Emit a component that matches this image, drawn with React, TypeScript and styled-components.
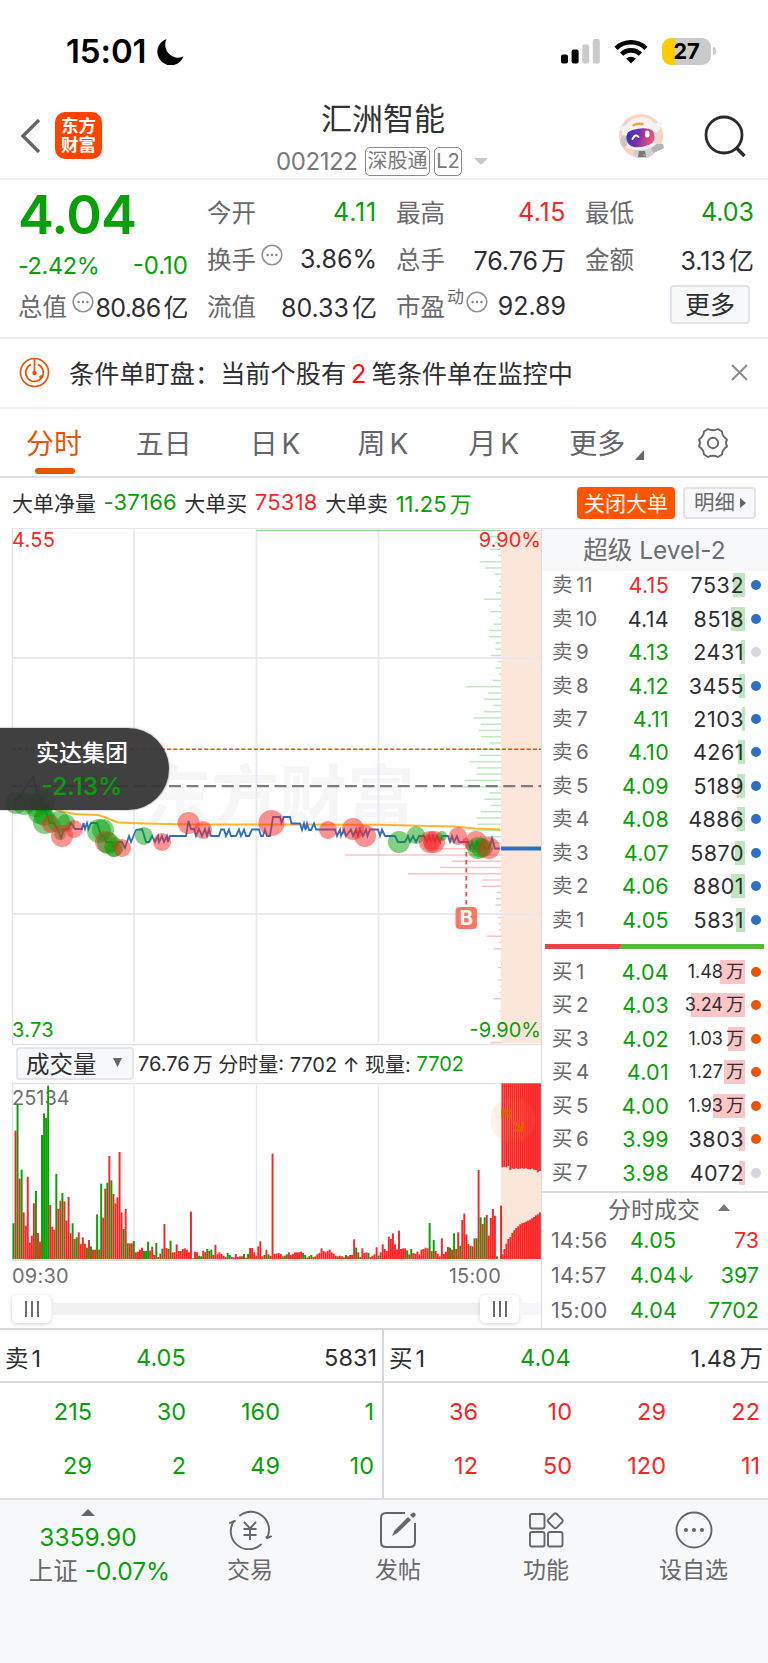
import type { ReactNode } from "react";
import styled, { createGlobalStyle } from "styled-components";

const colors = {
  up: "#f92626",
  down: "#07a007",
  text: "#2e2e31",
  label: "#69696b",
  line: "#dcdde2",
  brand: "#ff5500",
  accent: "#ea5504",
  panel: "#f7f8fa",
};

const GlobalStyle = createGlobalStyle`
  * { box-sizing: border-box; }
  body {
    margin: 0;
    background: #fff;
    color: ${colors.text};
    font-family: Inter, "Noto Sans CJK SC", sans-serif;
    font-weight: 400;
  }
  svg { display: block; }
`;

type Tone = "up" | "down" | "text" | "label";

const Page = styled.div`
  width: 768px;
  height: 1663px;
  overflow: hidden;
  display: flex;
  flex-direction: column;
  white-space: nowrap;
`;

const Num = styled.span<{ $tone?: Tone; $size?: number; $track?: number }>`
  color: ${(p) => colors[p.$tone ?? "text"]};
  ${(p) => p.$size && `font-size: ${p.$size}px;`}
  letter-spacing: ${(p) => p.$track ?? 0}px;
`;

// 万 / 亿 after a number, or the level after 卖 / 买
const Spaced = styled.span`
  margin-left: 3px;
`;

/* ---------- status bar ---------- */

const StatusBar = styled.div`
  height: 101px;
  padding: 1px 52px 0 66px;
  display: flex;
  align-items: center;
  justify-content: space-between;
`;

const Clock = styled.div`
  display: flex;
  align-items: center;
  gap: 11px;
  font-size: 33px;
  font-weight: 600;
  color: #000;
  letter-spacing: -0.1px;
`;

const StatusIcons = styled.div`
  display: flex;
  align-items: center;
  gap: 14px;
`;

const Battery = styled.div`
  width: 49px;
  height: 27px;
  border-radius: 9px;
  background: linear-gradient(90deg, #ffcc00 0 13px, #cacaca 13px);
  color: #000;
  font-size: 22px;
  font-weight: 700;
  line-height: 27px;
  text-align: center;
  letter-spacing: -0.2px;
`;

const BatteryRow = styled.div`
  display: flex;
  align-items: center;
  gap: 2px;
`;

const BatteryTip = styled.div`
  width: 3px;
  height: 8px;
  border-radius: 0 3px 3px 0;
  background: #cacaca;
`;

/* ---------- title bar ---------- */

const TitleBar = styled.header`
  height: 79px;
  padding: 0 22px 0 20px;
  display: grid;
  grid-template-columns: 256px 212px 1fr;
  border-bottom: 2px solid #f0f0f1;
`;

const TitleLeft = styled.div`
  display: flex;
  align-items: center;
  gap: 13px;
  padding-bottom: 8px;
`;

const Logo = styled.div`
  width: 47px;
  height: 47px;
  border-radius: 10px;
  background: #ff4400;
  color: #fff;
  font-size: 17.5px;
  font-weight: 700;
  line-height: 19px;
  padding-top: 4px;
  text-align: center;
`;

const TitleCenter = styled.div`
  display: flex;
  flex-direction: column;
  color: #333;
`;

const StockName = styled.div`
  padding: 0 0 0 45px;
  margin-top: -2px;
  font-size: 31px;
  line-height: 39px;
`;

const StockCode = styled.div`
  display: flex;
  align-items: center;
  gap: 4px;
  margin-top: 8px;
  height: 30px;
  font-size: 24px;
  letter-spacing: -0.4px;
  color: #79797b;
  svg {
    flex: none;
    margin-left: 8px;
  }
`;

const CodeNumber = styled.span`
  width: 85px;
`;

const CodeTag = styled.span<{ $width: number }>`
  flex: none;
  width: ${(p) => p.$width}px;
  height: 29px;
  border: 1.5px solid #8b8b8d;
  border-radius: 5px;
  font-size: 20px;
  letter-spacing: 0;
  line-height: 26px;
  text-align: center;
`;

const TitleRight = styled.div`
  display: flex;
  justify-content: flex-end;
  align-items: center;
  gap: 39px;
  padding-bottom: 8px;
`;

/* ---------- quote ---------- */

const Quote = styled.section`
  height: 159px;
  padding: 8px 13px 0 18px;
  display: grid;
  grid-template-columns: 170px 170px 170px 169px;
  column-gap: 19px;
  border-bottom: 2px solid #efeff0;
`;

const QuoteCol = styled.div`
  display: flex;
  flex-direction: column;
`;

const Price = styled.div`
  height: 53px;
  line-height: 53px;
  font-size: 54px;
  font-weight: 600;
  color: ${colors.down};
  letter-spacing: -0.8px;
`;

const Cell = styled.div`
  height: 47px;
  display: flex;
  justify-content: space-between;
  align-items: center;
  font-size: 25px;
  letter-spacing: 0.2px;
`;

const ChangeCell = styled(Cell)`
  height: 41px;
  padding-top: 7px;
  font-size: 23.5px;
  letter-spacing: -0.2px;
`;

const CellLabel = styled.span`
  display: flex;
  align-items: center;
  gap: 5px;
  font-size: 24.5px;
  letter-spacing: 0;
  color: ${colors.label};
  sup {
    font-size: 17px;
    margin: -16px -3px 0 -3px;
    line-height: 1;
  }
  svg {
    margin-top: -8px;
  }
`;

const MoreButton = styled.button`
  width: 80px;
  height: 39px;
  padding: 0;
  margin: 3px 4px 0 auto;
  border: 2px solid #e2e3e9;
  border-radius: 4px;
  background: ${colors.panel};
  color: ${colors.text};
  font: 400 25px/34px Inter, "Noto Sans CJK SC", sans-serif;
`;

/* ---------- alert ---------- */

const Alert = styled.section`
  height: 70px;
  padding: 0 20px 2px 19px;
  display: flex;
  align-items: center;
  border-bottom: 2px solid #efeff0;
  font-size: 25.2px;
`;

const AlertText = styled.span`
  margin-left: 19px;
  flex: 1;
  em {
    font-style: normal;
    color: #ff0f0f;
    margin: 0 5px 0 5px;
  }
`;

/* ---------- tabs ---------- */

const Tabs = styled.nav`
  height: 69px;
  display: flex;
  padding: 0 39px 0 26px;
  border-bottom: 2px solid ${colors.line};
`;

const Tab = styled.div<{ $width: number; $active?: boolean }>`
  width: ${(p) => p.$width}px;
  padding-top: 14px;
  font-size: 28px;
  line-height: 42px;
  word-spacing: -4px;
  color: ${(p) => (p.$active ? colors.accent : "#666668")};
  display: flex;
  flex-direction: column;
`;

const TabUnderline = styled.i`
  width: 40px;
  height: 6px;
  margin: 3px 0 0 9px;
  border-radius: 3px;
  background: ${colors.accent};
`;

const TabMore = styled.span`
  display: flex;
  align-items: flex-end;
  gap: 10px;
  svg {
    margin-bottom: 5px;
  }
`;

const Gear = styled.div`
  padding-top: 18px;
`;

/* ---------- big order info ---------- */

const BigOrders = styled.div`
  height: 50px;
  padding: 0 12px;
  display: flex;
  align-items: center;
  gap: 7.5px;
  font-size: 21px;
`;

const BigOrderText = styled.div`
  display: flex;
  align-items: center;
  gap: 7.5px;
  padding-bottom: 2px;
`;

const BigOrderActions = styled.div`
  margin-left: auto;
  display: flex;
  gap: 8px;
`;

const ToggleOrders = styled.button`
  width: 98px;
  height: 32px;
  padding: 0;
  border: 0;
  border-radius: 4px;
  background: ${colors.brand};
  color: #fff;
  font: 400 21px/31px Inter, "Noto Sans CJK SC", sans-serif;
`;

const DetailButton = styled.button`
  width: 73px;
  height: 32px;
  padding: 0 0 0 9px;
  display: flex;
  align-items: center;
  gap: 5px;
  border: 2px solid #e2e3e9;
  border-radius: 4px;
  background: ${colors.panel};
  color: ${colors.label};
  font: 400 20.5px/28px Inter, "Noto Sans CJK SC", sans-serif;
`;

/* ---------- charts ---------- */

const Main = styled.main`
  height: 802px;
  display: grid;
  grid-template-columns: 541px 227px;
  border-bottom: 2px solid #d6d8de;
`;

const ChartColumn = styled.div`
  position: relative;
  display: flex;
  flex-direction: column;
`;

const FloatPill = styled.div`
  position: absolute;
  left: 0;
  top: 200px;
  width: 169px;
  height: 82px;
  padding: 6px 5px 0 0;
  border-radius: 0 42px 42px 0;
  background: rgba(52, 52, 52, 0.94);
  box-shadow: 0 0 2px rgba(0, 0, 0, 0.5);
  color: #fff;
  text-align: center;
  font-size: 23px;
  font-weight: 500;
  line-height: 38px;
  div {
    color: ${colors.down};
    font-size: 24.5px;
    line-height: 28px;
  }
`;

const VolumeHead = styled.div`
  height: 37px;
  padding: 0 0 2px 16px;
  display: flex;
  align-items: center;
  font-size: 20px;
`;

const VolumeSelect = styled.div`
  width: 118px;
  height: 33px;
  margin-right: 4px;
  padding: 0 10px 2px 8px;
  display: flex;
  align-items: center;
  justify-content: space-between;
  border: 2px solid #e4e5ea;
  border-radius: 4px;
  background: ${colors.panel};
  font-size: 23.5px;
`;

const TimeAxis = styled.div`
  height: 33px;
  padding: 0 40px 3px 12px;
  display: flex;
  align-items: center;
  justify-content: space-between;
  font-size: 20px;
  letter-spacing: 0.2px;
  color: #6f6f71;
`;

const Slider = styled.div`
  height: 30px;
  margin: 0 0 0 12px;
  display: flex;
  align-items: center;
`;

const SliderTrack = styled.div<{ $width?: number }>`
  height: 12px;
  ${(p) => (p.$width ? `width: ${p.$width}px;` : "flex: 1;")}
  background: ${(p) => (p.$width ? "#f7f7fb" : "#f1f1f3")};
`;

const SliderThumb = styled.div`
  width: 39px;
  height: 28px;
  border-radius: 5px;
  background: #fff;
  box-shadow: 0 1px 4px rgba(0, 0, 0, 0.18);
  display: flex;
  align-items: center;
  justify-content: center;
  gap: 4px;
  i {
    width: 2px;
    height: 16px;
    background: #6d6d6d;
  }
`;

/* ---------- order book ---------- */

const Book = styled.aside`
  display: flex;
  flex-direction: column;
  border-left: 1px solid ${colors.line};
`;

const BookTitle = styled.div`
  height: 43px;
  border-top: 1px solid ${colors.line};
  background: ${colors.panel};
  color: #6d6d6f;
  font-size: 24.5px;
  line-height: 42px;
  padding-right: 1px;
  text-align: center;
`;

const Orders = styled.div<{ $lift?: number }>`
  display: flex;
  flex-direction: column;
  margin-top: -${(p) => p.$lift ?? 0}px;
`;

const OrderRow = styled.div`
  height: 33.45px;
  padding: 0 7px 0 10px;
  display: grid;
  grid-template-columns: 24px 40px 53px 75px 1fr;
  align-items: center;
  line-height: 30px;
  font-size: 21.5px;
`;

const OrderName = styled.span`
  font-size: 20.5px;
  color: ${colors.label};
`;

const OrderPrice = styled.span<{ $tone: Tone }>`
  color: ${(p) => colors[p.$tone]};
  text-align: right;
  letter-spacing: 0.3px;
`;

const OrderVolume = styled.span<{ $side: string; $bar: number; $small?: boolean }>`
  margin-left: 12px;
  height: 24px;
  line-height: 24px;
  font-size: ${(p) => (p.$small ? 18 : 21.5)}px;
  letter-spacing: ${(p) => (p.$small ? 0 : 0.5)}px;
  text-align: right;
  margin-right: -1px;
  padding-right: 1px;
  background: linear-gradient(${(p) => (p.$side === "sell" ? "#bfe6bf, #bfe6bf" : "#fcc6c6, #fcc6c6")}) right / ${(p) => p.$bar}px 100% no-repeat;
`;

const Dot = styled.i<{ $color: string }>`
  width: 10px;
  height: 10px;
  margin-left: auto;
  border-radius: 50%;
  background: ${(p) => p.$color};
`;

const RatioBar = styled.div`
  height: 5px;
  margin: 8px 4px 6px 3px;
  background: linear-gradient(120deg, #ee4145 0 66px, #56b93d 66px);
`;

const TradesTitle = styled.div`
  height: 31.5px;
  margin-top: 2px;
  border-top: 2px solid ${colors.line};
  padding: 0 0 1px 66px;
  display: flex;
  align-items: center;
  gap: 18px;
  color: ${colors.label};
  font-size: 23px;
`;

const TradeRow = styled.div`
  height: 34.7px;
  padding: 0 9px 0 9px;
  display: grid;
  grid-template-columns: 79px 1fr auto;
  align-items: center;
  font-size: 21.5px;
`;

/* ---------- level one queue ---------- */

const Queue = styled.section`
  height: 170px;
  display: grid;
  grid-template-columns: 384px 384px;
  border-bottom: 2px solid ${colors.line};
`;

const QueueSide = styled.div`
  &:first-child {
    border-right: 2px solid #d6d8de;
  }
`;

const QueueHead = styled.div`
  height: 53px;
  padding: 3px 5px 0 5px;
  display: grid;
  grid-template-columns: 131px 48px 1fr;
  align-items: center;
  border-bottom: 2px solid #d6d8de;
  font-size: 23.5px;
  & > :last-child {
    text-align: right;
  }
`;

const QueueGrid = styled.div<{ $tone: Tone }>`
  height: 113px;
  padding: 1px 8px 0 0;
  display: grid;
  grid-template-columns: 94px 94px 94px 94px;
  grid-auto-rows: 54px;
  align-items: center;
  justify-content: end;
  text-align: right;
  font-size: 23.5px;
  color: ${(p) => colors[p.$tone]};
`;

/* ---------- bottom bar ---------- */

const BottomBar = styled.footer`
  flex: 1;
  padding-top: 9px;
  display: grid;
  grid-template-columns: 176px 148px 148px 148px 147px;
  background: ${colors.panel};
`;

const IndexBox = styled.div`
  display: flex;
  flex-direction: column;
  align-items: center;
  font-size: 24.5px;
  line-height: 34px;
  color: ${colors.label};
  & > div {
    height: 34px;
  }
  & > :first-child {
    margin-bottom: 4px;
  }
  & > :last-child {
    margin-left: 23px;
  }
`;

const NavItem = styled.div`
  display: flex;
  flex-direction: column;
  align-items: center;
  padding-top: 1px;
  gap: 3px;
  font-size: 23px;
  line-height: 34px;
  color: ${colors.label};
`;

/* ---------- data ---------- */

const sells: [string, string, Tone, string, number, boolean?][] = [
  ["11", "4.15", "up", "7532", 12],
  ["10", "4.14", "text", "8518", 14],
  ["9", "4.13", "down", "2431", 4, true],
  ["8", "4.12", "down", "3455", 6],
  ["7", "4.11", "down", "2103", 3],
  ["6", "4.10", "down", "4261", 7],
  ["5", "4.09", "down", "5189", 8.5],
  ["4", "4.08", "down", "4886", 8],
  ["3", "4.07", "down", "5870", 10],
  ["2", "4.06", "down", "8801", 14.5],
  ["1", "4.05", "down", "5831", 9.5],
];

const buys: [string, string, string, number, boolean?][] = [
  ["1", "4.04", "1.48万", 25],
  ["2", "4.03", "3.24万", 54],
  ["3", "4.02", "1.03万", 17],
  ["4", "4.01", "1.27万", 21],
  ["5", "4.00", "1.93万", 32],
  ["6", "3.99", "3803", 6],
  ["7", "3.98", "4072", 6.5, true],
];

// resting orders by price step, widths in px
const sellDepth = [
  0, 20, 7, 11, 3, 21.5, 15.6, 6, 1.5, 2.5, 5, 17, 2, 10.5, 1.5, 7.3, 12.5, 12, 5.5, 5.5, 10, 3, 5.5, 2.5, 8.3,
  35, 13, 17, 7.6, 17, 28, 20.5, 22, 20, 11.5, 33, 21.5, 31.6, 24, 24.7, 36, 41, 11.5, 16.7, 9.7, 20, 24.7, 23.6,
  28, 21, 14,
];
const buyDepth = [
  73, 156, 49.4, 61, 93, 18.4, 19.5, 4.5, 5.2, 5.6, 1, 2.8, 2.4, 1.7, 14, 1.4, 7.3, 0.7, 0.7, 3, 0.7, 3.5, 1,
  1.4, 7.6, 0.7, 1.4, 0.4, 0.4, 0.4, 0.4, 10.8,
];

// minute volume, negative = down minute
const volumes = [
  -107, 385, -465, 241, -268, 140, 100, 247, 49, 70, 167, -204, 78, 52, -372, -437, -423, -520, 162, 97, 88, -255,
  150, 175, -198, 173, 115, 186, 77, -107, 60, -65, 80, 45, 65, 46, -34, 57, -38, 28, 28, -134, 28, -226, 124, 211,
  -229, 309, -236, 195, 167, 185, 321, 140, -90, 150, -47, 47, 47, -54, 20, 22, 28, 34, -24, -24, -52, 25, 37, 12,
  -48, 6, 16, -31, 105, 33, 30, -55, 20, 20, 44, 24, 24, 30, 32, 28, 20, 142, -2, 22, 20, -10, -8, 25, 20, -30, 24,
  -28, 12, 42, 14, 20, 15, 10, 6, -18, -12, 6, 5, 15, 6, 8, 8, -15, 4, -15, 33, 33, 20, 10, 38, 53, 8, -12, 28,
  -14, 10, 316, 16, 16, 18, 15, -8, 10, -14, 20, 12, 15, 20, 20, 20, 22, -18, -12, 4, 8, -12, 6, 8, 14, 18, 32,
  24, 20, 24, 28, 20, 16, 10, -8, 10, 8, 5, -12, 8, 12, 12, 59, -34, 20, -6, 32, 18, 20, -18, 6, 10, 14, 35, -10,
  20, 44, 30, 24, 67, 60, 77, 44, 28, 85, 30, 32, 32, -26, 14, -30, 18, 16, 22, 14, 28, 30, 34, 32, -108, 24, -57,
  24, 16, 8, 62, 15, 22, 36, -34, 28, -77, 30, 80, -40, 117, 136, 74, 45, -40, 38, 62, -62, 267, -125, 105, -125,
  132, 70, 123, 150, 130, -8, 0, 160,
];

const auctionTop = [252, 250, 252, 248, 260, 256, 257, 255, 257, 256, 255, 256, 255, 257, 258, 256, 259, 260, 267, 263];
const auctionBottom = [14, 30, 46, 60, 66, 78, 86, 93, 98, 104, 107, 109, 112, 115, 118, 122, 126, 131, 134, 140];

const priceLine: [number, number][] = [
  [13, 800], [20, 796], [27, 785], [33, 777], [38, 795], [44, 806], [50, 823], [54, 823], [58, 830], [61, 838],
  [64, 829], [68, 829], [71, 823], [75, 829], [82, 829], [83.5, 823], [85, 829], [87, 823], [88.5, 829], [91, 823],
  [97, 823], [101, 835.5], [104, 836], [106, 842], [111, 842], [114, 848], [118, 842], [122, 842], [125, 848],
  [129, 836], [131, 842], [136, 830], [142, 829], [146, 842], [149, 842], [152, 836], [155, 842], [158, 836],
  [159, 842], [162, 836], [164, 842], [167, 836], [168, 842], [170, 836], [186, 836], [188.5, 821], [191, 829],
  [194, 829], [196, 836], [199, 829], [202, 836], [205, 829], [207, 836], [209, 829], [211, 836], [219, 836],
  [221, 829.5], [224, 829.5], [226, 836], [229, 829.5], [231, 836], [236, 836], [239, 829.5], [241, 836],
  [244, 829.5], [246, 836], [249, 836], [252, 829.5], [259, 829.5], [261, 836], [263, 836], [265, 829.5],
  [267, 836], [270, 836], [273, 817], [280, 817], [281.5, 823], [284, 817], [290, 817], [291.5, 823.5], [300, 823.5],
  [302, 830], [304, 823.5], [305.5, 830], [307, 823.5], [309, 830], [311, 830], [314, 823.5], [316, 829.5],
  [335, 829.5], [337, 836], [340, 829.5], [341, 836], [344, 829.5], [346, 836], [351, 829.5], [353, 836],
  [356, 829.5], [358, 836], [360, 829.5], [363, 836], [366, 829.5], [367.5, 836], [370, 829.5], [378, 829.5],
  [380, 836], [382, 829.5], [385, 836], [395, 836], [398, 842], [405, 842], [408, 836], [410, 842], [413, 836],
  [416, 842], [419, 836], [424, 836], [427, 842], [429, 836], [431, 842], [433, 836], [435, 842], [437, 836],
  [440, 842], [442, 836], [448, 836], [450, 842], [452, 836], [454, 842], [457, 836], [459, 842], [468, 842],
  [470, 848.5], [472, 842], [474, 848.5], [477, 842], [479, 848.5], [482, 842], [485, 848.5], [489, 848.5],
  [492, 838], [495, 848.5], [500, 848.5],
];

const bigOrders: [number, number, number, "r" | "g"][] = [
  [16, 803, 11, "g"], [24, 804, 11, "g"], [36, 805, 12, "g"], [43, 801, 12, "g"], [40, 812, 12, "g"],
  [45, 822, 12, "g"], [44, 816, 10, "g"], [51, 824, 9, "r"], [59, 822, 11, "g"], [66, 823, 9, "g"],
  [60, 834, 6, "g"], [62, 836, 11, "r"], [74, 829, 9, "r"], [103, 830, 11, "g"], [99, 831, 12, "g"],
  [106, 842, 11, "r"], [108, 843, 11, "g"], [114, 847, 10, "g"], [114, 849, 8, "g"], [122, 848, 9, "r"],
  [144, 836, 9, "g"], [162, 842, 9, "r"], [188.5, 823, 11, "r"], [203, 830, 9, "r"], [271.5, 823, 13, "r"],
  [328, 830, 9, "r"], [353, 829, 11, "r"], [365, 836, 11, "r"], [399, 842, 11, "g"], [416, 835, 9, "g"],
  [430, 842, 11, "r"], [434, 842, 11, "r"], [431.5, 842, 8, "r"], [442, 836, 5, "g"], [458, 836, 9, "r"],
  [466, 842, 4, "r"], [476, 842, 11, "r"], [478, 848, 11, "g"], [481, 848, 10, "g"], [484, 848, 9, "g"],
  [489, 848, 11, "r"],
];

/* ---------- drawings ---------- */

const gridX = [134, 256.5, 378.5];

const Amount = ({ value }: { value: string }) => {
  const unit = /[万亿]$/.test(value) ? value.slice(-1) : "";
  return (
    <>
      {unit ? value.slice(0, -1) : value}
      {unit && <Spaced>{unit}</Spaced>}
    </>
  );
};

const MoreDots = () => (
  <svg width="22" height="22" viewBox="0 0 22 22" fill="none">
    <circle cx="11" cy="11" r="9.8" stroke="#929294" strokeWidth="1.6" />
    {[6.6, 11, 15.4].map((x) => (
      <circle key={x} cx={x} cy="11" r="1.2" fill="#858587" />
    ))}
  </svg>
);

const Triangle = ({ w, h, color, points }: { w: number; h: number; color: string; points: string }) => (
  <svg width={w} height={h} viewBox="0 0 10 10" preserveAspectRatio="none">
    <polygon points={points} fill={color} />
  </svg>
);

const Robot = () => (
  <svg width="47" height="46" viewBox="0 0 47 46">
    <defs>
      <linearGradient id="visor" x1="0" y1="0" x2="1" y2="0.2">
        <stop offset="0" stopColor="#2b36ac" />
        <stop offset="0.5" stopColor="#7d2fae" />
        <stop offset="1" stopColor="#ef5373" />
      </linearGradient>
    </defs>
    <circle cx="23" cy="23" r="22" fill="#fdd3c0" />
    <path d="M17 34h16l2 8-5 3H20l-5-3z" fill="#cfcfd6" />
    <path d="M33 35l6-4 6 0 1 4-6 3-5 2z" fill="#b4b4bd" />
    <path d="M21 38h6l1 6h-8z" fill="#77777f" />
    <circle cx="26" cy="42" r="1" fill="#f39a60" />
    <path d="M1 12q2 3 7 0 6-8 16-8 8 0 12 6 6 1 7-4 3 8-4 13l0 9q-2 8-17 9-13 1-16-7l-2-12q-3-2-3-6z" fill="#f4f3f5" />
    <ellipse cx="6" cy="28" rx="3.5" ry="6" fill="#c8c7ce" />
    <ellipse cx="37.500" cy="25" rx="3" ry="6" fill="#dcdce1" />
    <path d="M8.500 26q-1-7 6-9 10-3 17-1 5 1 5 8 0 6-6 8-8 3-15 2-6-2-7-8z" fill="url(#visor)" />
    <path d="M14.500 26q3-6 6-2" fill="none" stroke="#fff" strokeWidth="2" strokeLinecap="round" />
    <rect x="27" y="17.500" width="4.5" height="7" rx="2.2" fill="#fff" />
    <path d="M14 11.500q6-3 12-1.500l-1 2.500q-6-1-10 1z" fill="#eda545" />
  </svg>
);

const PriceChart = () => (
  <svg width="541" height="518" viewBox="0 528 541 518" fontFamily="Inter, sans-serif">
    <text x="143" y="822" fontSize="68" fontWeight="700" fill="#f6f6f6" fontFamily="Noto Sans CJK SC">
      东方财富
    </text>
    <rect x="501" y="530" width="40" height="513" fill="#fce6da" />
    <g stroke="#e7e9f0" strokeWidth="1.8">
      {gridX.map((x) => (
        <line key={x} x1={x} x2={x} y1="529" y2="1042" />
      ))}
      <line x1="12" x2="541" y1="658" y2="658" />
      <line x1="12" x2="541" y1="914" y2="914" />
    </g>
    <path d="M541 528H12.5V1044.5H541" fill="none" stroke="#dfe1e6" strokeWidth="1.3" />
    {sellDepth.map((w, i) => (
      <rect key={i} x={501 - w} y={529.7 + i * 6.25} width={w} height="1.5" fill="#bfe8bf" />
    ))}
    {buyDepth.map((w, i) => (
      <rect key={i} x={501 - w} y={848 + i * 6.25} width={w} height="1.5" fill="#fdc3c3" />
    ))}
    <line x1="256.5" x2="501" y1="530.5" y2="530.5" stroke="#94d794" strokeWidth="1.3" />
    <line x1="12" x2="541" y1="749.3" y2="749.3" stroke={colors.accent} strokeWidth="1.6" strokeDasharray="4.2 2" />
    <line x1="12" x2="541" y1="786.2" y2="786.2" stroke="#7d7d7d" strokeWidth="2.2" strokeDasharray="12 5.6" strokeDashoffset="1.5" />
    <polyline
      points="12,800 40,805 64,812 75,814 98,815 107,818 118,822.5 145,823.5 190,824.5 256,824.6 380,824.7 430,826 455,826.5 475,828.5 500,829.5"
      fill="none"
      stroke="#ffb62e"
      strokeWidth="2"
    />
    <polyline points={priceLine.map((p) => p.join()).join(" ")} fill="none" stroke="#2d70c3" strokeWidth="1.8" />
    {bigOrders.map(([x, y, r, side], i) => (
      <circle key={i} cx={x} cy={y} r={r} fill={side === "r" ? "#f92626" : "#07a007"} opacity="0.5" />
    ))}
    <rect x="501" y="846.5" width="40" height="4" fill="#2d70c3" />
    <line x1="466.3" x2="466.3" y1="844" y2="907" stroke="#fd4a3c" strokeWidth="1.8" strokeDasharray="4.5 3.5" />
    <rect x="455.5" y="907" width="21.5" height="22" rx="4" fill="#ff7665" />
    <text x="466.3" y="925" fontSize="20" fontWeight="700" fill="#fff" textAnchor="middle">
      B
    </text>
    <g fontSize="20">
      <text x="12" y="547" fill={colors.up} letterSpacing="0.3">4.55</text>
      <text x="541" y="547" fill={colors.up} textAnchor="end">9.90%</text>
      <text x="12" y="1037" fill={colors.down} letterSpacing="0.3">3.73</text>
      <text x="541" y="1037" fill={colors.down} textAnchor="end">-9.90%</text>
    </g>
  </svg>
);

const VolumeChart = () => (
  <svg width="541" height="178" viewBox="0 1083 541 178">
    <path d="M12.5 1260V1083.5H541" fill="none" stroke="#e3e5ea" strokeWidth="1.3" />
    {gridX.map((x) => (
      <line key={x} x1={x} x2={x} y1="1085" y2="1259" stroke="#e4e7ed" strokeWidth="1.3" />
    ))}
    <rect x="501" y="1083" width="40" height="176" fill="#fce6da" />
    <text x="12" y="1105" fontSize="20" fill="#6f6f71" fontFamily="Inter, sans-serif">25134</text>
    {volumes.map((v, i) => (
      <rect
        key={i}
        x={12.5 + i * 2.04}
        y={1259 - Math.abs(v) / 3}
        width="1.95"
        height={Math.abs(v) / 3}
        fill={v < 0 ? colors.down : colors.up}
      />
    ))}
    {auctionTop.map((v, i) => (
      <rect key={i} x={501.5 + i * 1.97} y="1083.3" width="1.9" height={v / 3} fill={colors.up} />
    ))}
    {auctionBottom.map((v, i) => (
      <rect key={i} x={501.5 + i * 1.97} y={1259 - v / 3} width="1.9" height={v / 3} fill={colors.up} />
    ))}
    <circle cx="513" cy="1120" r="22.5" fill="#f9803a" opacity="0.12" />
    <path
      d="M511.500 1110.500h-9v8M503 1111l8 7M523 1122v8.500h-9M522.500 1130l-8-7.500"
      fill="none"
      stroke="#e85f00"
      strokeWidth="2.4"
    />
    <line x1="12" x2="541" y1="1260" y2="1260" stroke="#d5d8dd" strokeWidth="1.6" />
  </svg>
);

const TradeIcon = () => (
  <svg width="44" height="40" viewBox="0 0 44 40" fill="none" stroke="#666668" strokeWidth="1.9" strokeLinecap="round">
    <path d="M12 5.5A18 18 0 0 1 39 28M39 28l-.6-1M39 28l4-1.6" />
    <path d="M33 34.5A18 18 0 0 1 6 11M6 11l-4 2M6 11l1 .2" />
    <path d="M16 12l6 6.5 6-6.5M22 19v11M15.500 19h13M15.500 25h13" strokeLinecap="butt" />
  </svg>
);

const PostIcon = () => (
  <svg width="40" height="40" viewBox="0 0 40 40" fill="none" stroke="#666668" strokeWidth="2">
    <path d="M27 3H8Q3 3 3 8v24q0 5 5 5h24q5 0 5-5V13" />
    <path d="M14 26l2.500-5.500L30 7l3 3L19.500 23z" fill="#666668" stroke="none" />
    <path d="M32 5l3-2.500q3 0 2.500 3L35 8z" fill="#666668" stroke="none" />
  </svg>
);

const AppsIcon = () => (
  <svg width="40" height="40" viewBox="0 0 40 40" fill="none" stroke="#666668" strokeWidth="1.9">
    <rect x="4" y="4" width="14.500" height="14.500" rx="2" />
    <rect x="4" y="22" width="14.500" height="14.500" rx="2" />
    <rect x="22" y="22" width="14.500" height="14.500" rx="2" />
    <rect x="23.500" y="5" width="11.600" height="11.600" rx="2" transform="rotate(45 29.300 10.800)" />
  </svg>
);

const FavoriteIcon = () => (
  <svg width="40" height="40" viewBox="0 0 40 40" fill="none">
    <circle cx="20" cy="20" r="17.5" stroke="#666668" strokeWidth="1.9" />
    {[12, 20, 28].map((x) => (
      <circle key={x} cx={x} cy="20" r="2" fill="#666668" />
    ))}
  </svg>
);

const navItems: [string, ReactNode][] = [
  ["交易", <TradeIcon />],
  ["发帖", <PostIcon />],
  ["功能", <AppsIcon />],
  ["设自选", <FavoriteIcon />],
];

const App = () => {
  return (
    <Page>
      <GlobalStyle />
      <StatusBar>
        <Clock>
          15:01
          <svg width="28" height="27" viewBox="0 0 28 27">
            <path d="M9.500 1A13.500 13.500 0 1 0 26.500 18.500 13 13 0 0 1 9.500 1z" fill="#000" />
          </svg>
        </Clock>
        <StatusIcons>
          <svg width="39" height="25" viewBox="0 0 39 25">
            <rect x="0" y="15.500" width="7" height="9" rx="2" fill="#000" />
            <rect x="10.600" y="10.500" width="7" height="14" rx="2" fill="#000" />
            <rect x="21.200" y="5.500" width="7" height="19" rx="2" fill="#cacaca" />
            <rect x="31.800" y="0" width="7" height="24.500" rx="2" fill="#cacaca" />
          </svg>
          <svg width="34" height="25" viewBox="0 0 34 25" fill="none" stroke="#000" strokeWidth="4.6">
            <path d="M2 9.400A21.500 21.500 0 0 1 32 9.400" />
            <path d="M7.600 15.200A13.500 13.500 0 0 1 26.400 15.200" />
            <path d="M17 24.500l-4.800-4.900a7 7 0 0 1 9.600 0z" fill="#000" stroke="none" />
          </svg>
          <BatteryRow>
            <Battery>27</Battery>
            <BatteryTip />
          </BatteryRow>
        </StatusIcons>
      </StatusBar>

      <TitleBar>
        <TitleLeft>
          <svg width="22" height="36" viewBox="0 0 22 36">
            <path d="M19 2L3 18l16 16" fill="none" stroke="#666" strokeWidth="3.4" />
          </svg>
          <Logo>
            东方
            <br />
            财富
          </Logo>
        </TitleLeft>
        <TitleCenter>
          <StockName>汇洲智能</StockName>
          <StockCode>
            <CodeNumber>002122</CodeNumber>
            <CodeTag $width={65}>深股通</CodeTag>
            <CodeTag $width={28}>L2</CodeTag>
            <Triangle w={14} h={7} color="#c9c9cb" points="0,0 10,0 5,10" />
          </StockCode>
        </TitleCenter>
        <TitleRight>
          <Robot />
          <svg width="42" height="42" viewBox="0 0 42 42" fill="none" stroke="#2b2b2b" strokeWidth="2.800">
            <circle cx="20" cy="20" r="18" />
            <path d="M32.500 33l8 8" strokeWidth="3.400" />
          </svg>
        </TitleRight>
      </TitleBar>

      <Quote>
        <QuoteCol>
          <Price>4.04</Price>
          <ChangeCell>
            <Num $tone="down" $track={-0.4}>-2.42%</Num>
            <Num $tone="down" $size={24}>-0.10</Num>
          </ChangeCell>
          <Cell>
            <CellLabel>总值<MoreDots /></CellLabel>
            <Num $track={-0.6}><Amount value="80.86亿" /></Num>
          </Cell>
        </QuoteCol>
        <QuoteCol>
          <Cell><CellLabel>今开</CellLabel><Num $tone="down" $track={0.8}>4.11</Num></Cell>
          <Cell><CellLabel>换手<MoreDots /></CellLabel><Num>3.86%</Num></Cell>
          <Cell><CellLabel>流值</CellLabel><Num><Amount value="80.33亿" /></Num></Cell>
        </QuoteCol>
        <QuoteCol>
          <Cell><CellLabel>最高</CellLabel><Num $tone="up" $track={0.6}>4.15</Num></Cell>
          <Cell><CellLabel>总手</CellLabel><Num><Amount value="76.76万" /></Num></Cell>
          <Cell><CellLabel>市盈<sup>动</sup><MoreDots /></CellLabel><Num>92.89</Num></Cell>
        </QuoteCol>
        <QuoteCol>
          <Cell><CellLabel>最低</CellLabel><Num $tone="down">4.03</Num></Cell>
          <Cell><CellLabel>金额</CellLabel><Num><Amount value="3.13亿" /></Num></Cell>
          <MoreButton>更多</MoreButton>
        </QuoteCol>
      </Quote>

      <Alert>
        <svg width="31" height="31" viewBox="0 0 31 31" fill="none" stroke={colors.accent} strokeWidth="1.700">
          <circle cx="15.500" cy="15.500" r="14" />
          <path d="M12 7.500A8.800 8.800 0 1 0 19 7.500M15.500 2v13" />
          <circle cx="15.500" cy="16" r="2.200" fill={colors.accent} stroke="none" />
          <circle cx="22" cy="20" r="1.800" fill={colors.accent} stroke="none" />
        </svg>
        <AlertText>
          条件单盯盘：当前个股有<em>2</em>笔条件单在监控中
        </AlertText>
        <svg width="17" height="17" viewBox="0 0 17 17" stroke="#8c8c8e" strokeWidth="2">
          <path d="M1 1l15 15M16 1L1 16" />
        </svg>
      </Alert>

      <Tabs>
        <Tab $width={110} $active>分时<TabUnderline /></Tab>
        <Tab $width={114}>五日</Tab>
        <Tab $width={108}>日 K</Tab>
        <Tab $width={111}>周 K</Tab>
        <Tab $width={101}>月 K</Tab>
        <Tab $width={128}>
          <TabMore>
            更多
            <Triangle w={9} h={10} color="#666668" points="10,0 10,10 0,10" />
          </TabMore>
        </Tab>
        <Gear>
          <svg width="32" height="32" viewBox="0 0 32 32" fill="none" stroke="#666668" strokeWidth="1.900">
            <path d="M11 2q5 2.500 10 0l4 2.500q.3 5 5 8-2 3.500 0 7-4.700 3-5 8L21 30q-5-2.500-10 0l-4-2.500q-.3-5-5-8 2-3.500 0-7 4.700-3 5-8z" strokeLinejoin="round" />
            <circle cx="16" cy="16" r="5.200" />
          </svg>
        </Gear>
      </Tabs>

      <BigOrders>
        <BigOrderText>
          大单净量<Num $tone="down" $size={22} $track={0.2}>-37166</Num>
          大单买<Num $tone="up" $size={22} $track={0.2}>75318</Num>
          大单卖<Num $tone="down" $size={22}><Amount value="11.25万" /></Num>
        </BigOrderText>
        <BigOrderActions>
          <ToggleOrders>关闭大单</ToggleOrders>
          <DetailButton>
            明细
            <Triangle w={6} h={10} color="#666668" points="0,0 10,5 0,10" />
          </DetailButton>
        </BigOrderActions>
      </BigOrders>

      <Main>
        <ChartColumn>
          <PriceChart />
          <VolumeHead>
            <VolumeSelect>
              成交量
              <Triangle w={9} h={9} color="#666668" points="0,0 10,0 5,10" />
            </VolumeSelect>
            <Amount value="76.76万" />&nbsp;分时量: 7702 ↑ 现量:&nbsp;<Num $tone="down">7702</Num>
          </VolumeHead>
          <VolumeChart />
          <TimeAxis>
            <span>09:30</span>
            <span>15:00</span>
          </TimeAxis>
          <Slider>
            <SliderThumb><i /><i /><i /></SliderThumb>
            <SliderTrack />
            <SliderThumb><i /><i /><i /></SliderThumb>
            <SliderTrack $width={22} />
          </Slider>
          <FloatPill>
            实达集团
            <div>-2.13%</div>
          </FloatPill>
        </ChartColumn>

        <Book>
          <BookTitle>超级 Level-2</BookTitle>
          <Orders $lift={2.5}>
            {sells.map(([n, price, tone, vol, bar, idle]) => (
              <OrderRow key={n}>
                <OrderName>卖</OrderName>
                <OrderName>{n}</OrderName>
                <OrderPrice $tone={tone}>{price}</OrderPrice>
                <OrderVolume $side="sell" $bar={bar}>{vol}</OrderVolume>
                <Dot $color={idle ? "#d4d7dd" : "#2d70c3"} />
              </OrderRow>
            ))}
          </Orders>
          <RatioBar />
          <Orders>
            {buys.map(([n, price, vol, bar, idle]) => (
              <OrderRow key={n}>
                <OrderName>买</OrderName>
                <OrderName>{n}</OrderName>
                <OrderPrice $tone="down">{price}</OrderPrice>
                <OrderVolume $side="buy" $bar={bar} $small={vol.endsWith("万")}><Amount value={vol} /></OrderVolume>
                <Dot $color={idle ? "#d4d7dd" : colors.accent} />
              </OrderRow>
            ))}
          </Orders>
          <TradesTitle>
            分时成交
            <Triangle w={12} h={7} color="#77777a" points="5,0 10,10 0,10" />
          </TradesTitle>
          <TradeRow><Num $tone="label" $track={0.3}>14:56</Num><Num $tone="down" $track={0.2}>4.05</Num><Num $tone="up">73</Num></TradeRow>
          <TradeRow><Num $tone="label" $track={0.3}>14:57</Num><Num $tone="down" $track={0.2}>4.04↓</Num><Num $tone="down">397</Num></TradeRow>
          <TradeRow><Num $tone="label" $track={0.3}>15:00</Num><Num $tone="down" $track={0.2}>4.04</Num><Num $tone="down">7702</Num></TradeRow>
        </Book>
      </Main>

      <Queue>
        <QueueSide>
          <QueueHead><span>卖<Spaced>1</Spaced></span><Num $tone="down">4.05</Num><span>5831</span></QueueHead>
          <QueueGrid $tone="down">
            {[215, 30, 160, 1, 29, 2, 49, 10].map((n) => <span key={n}>{n}</span>)}
          </QueueGrid>
        </QueueSide>
        <QueueSide>
          <QueueHead><span>买<Spaced>1</Spaced></span><Num $tone="down">4.04</Num><span><Amount value="1.48万" /></span></QueueHead>
          <QueueGrid $tone="up">
            {[36, 10, 29, 22, 12, 50, 120, 11].map((n) => <span key={n}>{n}</span>)}
          </QueueGrid>
        </QueueSide>
      </Queue>

      <BottomBar>
        <IndexBox>
          <Triangle w={14} h={7} color="#666668" points="5,0 10,10 0,10" />
          <div><Num $tone="down">3359.90</Num></div>
          <div>上证 <Num $tone="down">-0.07%</Num></div>
        </IndexBox>
        {navItems.map(([name, icon]) => (
          <NavItem key={name}>
            {icon}
            {name}
          </NavItem>
        ))}
      </BottomBar>
    </Page>
  );
};

export default App;
